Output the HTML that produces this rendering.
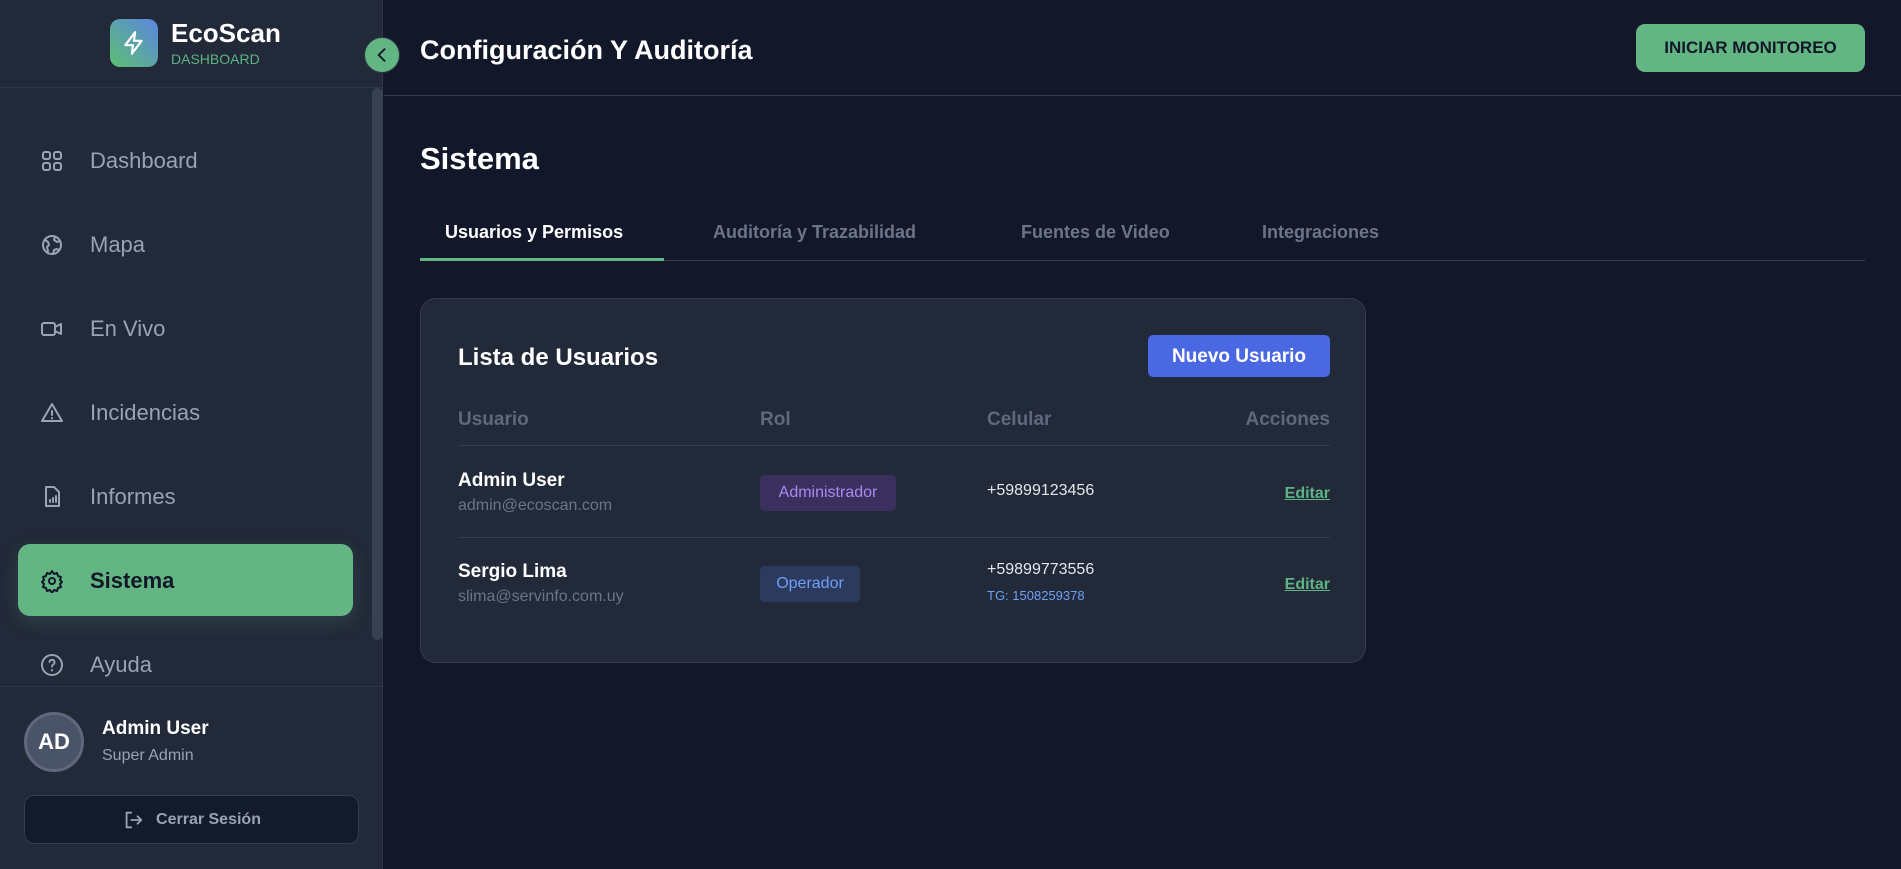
<!DOCTYPE html>
<html><head><meta charset="utf-8"><style>
*{margin:0;padding:0;box-sizing:border-box}
body{width:1901px;height:869px;overflow:hidden;background:#121829;font-family:"Liberation Sans",sans-serif;position:relative;color:#fff}
.a{position:absolute}
.side{left:0;top:0;width:383px;height:869px;background:#222939;border-right:1px solid #2f3646}
.nav{left:40px;font-size:22px;color:#9aa3b2;display:flex;align-items:center;height:30px}
.nav svg{width:24px;height:24px;margin-right:26px;fill:none;stroke:#9aa3b2;stroke-width:2;stroke-linecap:round;stroke-linejoin:round}
.tab{top:222px;font-size:18px;font-weight:bold;color:#6b7489}
.th{top:409px;font-size:19px;font-weight:bold;color:#5f687c}
.nm{font-size:19px;font-weight:bold;color:#fff}
.em{font-size:16px;color:#6b7489}
.ed{font-size:16px;font-weight:bold;color:#5fb382;text-decoration:underline;right:571px}
</style></head><body>
<div class="a side"></div>
<div class="a" style="left:110px;top:19px;width:48px;height:48px;border-radius:10px;background:linear-gradient(45deg,#5cbf73,#5b86e0)"></div>
<svg class="a" style="left:121px;top:30px" width="26" height="26" viewBox="0 0 24 24" fill="none" stroke="#fff" stroke-width="2" stroke-linejoin="round"><path d="M13 2L4 14h7l-1 8 9-12h-7z"/></svg>
<div class="a" style="left:171px;top:18px;font-size:26px;font-weight:bold">EcoScan</div>
<div class="a" style="left:171px;top:51px;font-size:14px;color:#5fb382">DASHBOARD</div>
<div class="a" style="left:0;top:87px;width:383px;height:1px;background:#2f3646"></div>
<div class="a" style="left:372px;top:88px;width:11px;height:552px;border-radius:6px;background:#374152"></div>
<div class="a" style="left:364px;top:37px;width:36px;height:36px;border-radius:50%;background:#63b583;border:1px solid #2f3646"></div>
<svg class="a" style="left:372px;top:45px" width="20" height="20" viewBox="0 0 24 24" fill="none" stroke="#111827" stroke-width="2.2" stroke-linecap="round"><path d="M15 5l-7 7 7 7"/></svg>

<div class="a nav" style="top:146px"><svg viewBox="0 0 24 24"><rect x="3" y="3" width="7" height="7" rx="2"/><rect x="14" y="3" width="7" height="7" rx="2"/><rect x="3" y="14" width="7" height="7" rx="2"/><rect x="14" y="14" width="7" height="7" rx="2"/></svg>Dashboard</div>
<div class="a nav" style="top:230px"><svg viewBox="0 0 24 24"><circle cx="12" cy="12" r="9"/><path d="M5 7l3 2 1 3-2 2 1 4M15 4l-1 3 3 2 3-1M13 21l1-4 3-1 2 1"/></svg>Mapa</div>
<div class="a nav" style="top:314px"><svg viewBox="0 0 24 24"><rect x="2" y="6" width="13" height="12" rx="2"/><path d="M15 10l6-3v10l-6-3"/></svg>En Vivo</div>
<div class="a nav" style="top:398px"><svg viewBox="0 0 24 24"><path d="M12 3L2 20h20z"/><path d="M12 10v4M12 17v.5"/></svg>Incidencias</div>
<div class="a nav" style="top:482px"><svg viewBox="0 0 24 24"><path d="M6 2h8l5 5v14H6z"/><path d="M10 17v-2M13 17v-4M16 17v-6"/></svg>Informes</div>
<div class="a" style="left:18px;top:544px;width:335px;height:72px;border-radius:12px;background:#63b583;box-shadow:0 6px 18px rgba(99,181,131,.18)"></div>
<div class="a nav" style="top:566px;color:#111827;font-weight:bold"><svg viewBox="0 0 24 24" style="stroke:#111827"><circle cx="12" cy="12" r="3"/><path d="M12 2l2 3 3-1 1 3 3 1-1 3 2 2-2 2 1 3-3 1-1 3-3-1-2 3-2-3-3 1-1-3-3-1 1-3-2-2 2-2-1-3 3-1 1-3 3 1z"/></svg>Sistema</div>
<div class="a nav" style="top:650px"><svg viewBox="0 0 24 24"><circle cx="12" cy="12" r="10"/><path d="M9.5 9a2.5 2.5 0 015 .5c0 2-2.5 2-2.5 4M12 17v.5"/></svg>Ayuda</div>
<div class="a" style="left:0;top:686px;width:383px;height:183px;background:#222939;border-top:1px solid #2f3646;border-right:1px solid #2f3646"></div>
<div class="a" style="left:24px;top:712px;width:60px;height:60px;border-radius:50%;background:#4a5468;border:3px solid #5f687c;text-align:center;line-height:54px;font-size:22px;font-weight:bold">AD</div>
<div class="a" style="left:102px;top:718px;font-size:19px;font-weight:bold">Admin User</div>
<div class="a" style="left:102px;top:747px;font-size:16px;color:#9aa3b2">Super Admin</div>
<div class="a" style="left:24px;top:795px;width:335px;height:49px;border-radius:10px;background:#131a2b;border:1px solid #343c4d;display:flex;align-items:center;justify-content:center;font-size:16px;font-weight:bold;color:#9aa3b2"><svg width="22" height="22" viewBox="0 0 24 24" fill="none" stroke="#9aa3b2" stroke-width="2" stroke-linecap="round" stroke-linejoin="round" style="margin-right:12px"><path d="M10 4H5v16h5M10 12h11M17 8l4 4-4 4"/></svg>Cerrar Sesión</div>

<div class="a" style="left:420px;top:35px;font-size:27px;font-weight:bold">Configuración Y Auditoría</div>
<div class="a" style="left:1636px;top:24px;width:229px;height:48px;border-radius:9px;background:#63b583;color:#111827;font-size:17px;font-weight:bold;text-align:center;line-height:48px">INICIAR MONITOREO</div>
<div class="a" style="left:384px;top:95px;width:1517px;height:1px;background:#343b4d"></div>
<div class="a" style="left:420px;top:141px;font-size:31px;font-weight:bold">Sistema</div>
<div class="a tab" style="left:445px;color:#fff">Usuarios y Permisos</div>
<div class="a tab" style="left:713px">Auditoría y Trazabilidad</div>
<div class="a tab" style="left:1021px">Fuentes de Video</div>
<div class="a tab" style="left:1262px">Integraciones</div>
<div class="a" style="left:420px;top:260px;width:1445px;height:1px;background:#343b4d"></div>
<div class="a" style="left:420px;top:258px;width:244px;height:3px;background:#63b583"></div>

<div class="a" style="left:420px;top:298px;width:946px;height:365px;border-radius:16px;background:#222939;border:1px solid #343b4d"></div>
<div class="a" style="left:458px;top:344px;font-size:24px;font-weight:bold">Lista de Usuarios</div>
<div class="a" style="left:1148px;top:335px;width:182px;height:42px;border-radius:5px;background:#4b68e3;font-size:19px;font-weight:bold;text-align:center;line-height:44px">Nuevo Usuario</div>
<div class="a th" style="left:458px">Usuario</div>
<div class="a th" style="left:760px">Rol</div>
<div class="a th" style="left:987px">Celular</div>
<div class="a th" style="right:571px">Acciones</div>
<div class="a" style="left:458px;top:445px;width:872px;height:1px;background:#343b4d"></div>
<div class="a nm" style="left:458px;top:470px">Admin User</div>
<div class="a em" style="left:458px;top:497px">admin@ecoscan.com</div>
<div class="a" style="left:760px;top:475px;width:136px;height:36px;border-radius:5px;background:#3b2f5e;color:#a68bf0;font-size:16px;text-align:center;line-height:36px">Administrador</div>
<div class="a" style="left:987px;top:482px;font-size:16px;color:#e5e7eb">+59899123456</div>
<div class="a ed" style="top:485px">Editar</div>
<div class="a" style="left:458px;top:537px;width:872px;height:1px;background:#343b4d"></div>
<div class="a nm" style="left:458px;top:561px">Sergio Lima</div>
<div class="a em" style="left:458px;top:588px">slima@servinfo.com.uy</div>
<div class="a" style="left:760px;top:566px;width:100px;height:36px;border-radius:5px;background:#2c3a5e;color:#6ea0f5;font-size:16px;text-align:center;line-height:36px">Operador</div>
<div class="a" style="left:987px;top:561px;font-size:16px;color:#e5e7eb">+59899773556</div>
<div class="a" style="left:987px;top:588px;font-size:13px;color:#6ea0f5">TG: 1508259378</div>
<div class="a ed" style="top:576px">Editar</div>
</body></html>
